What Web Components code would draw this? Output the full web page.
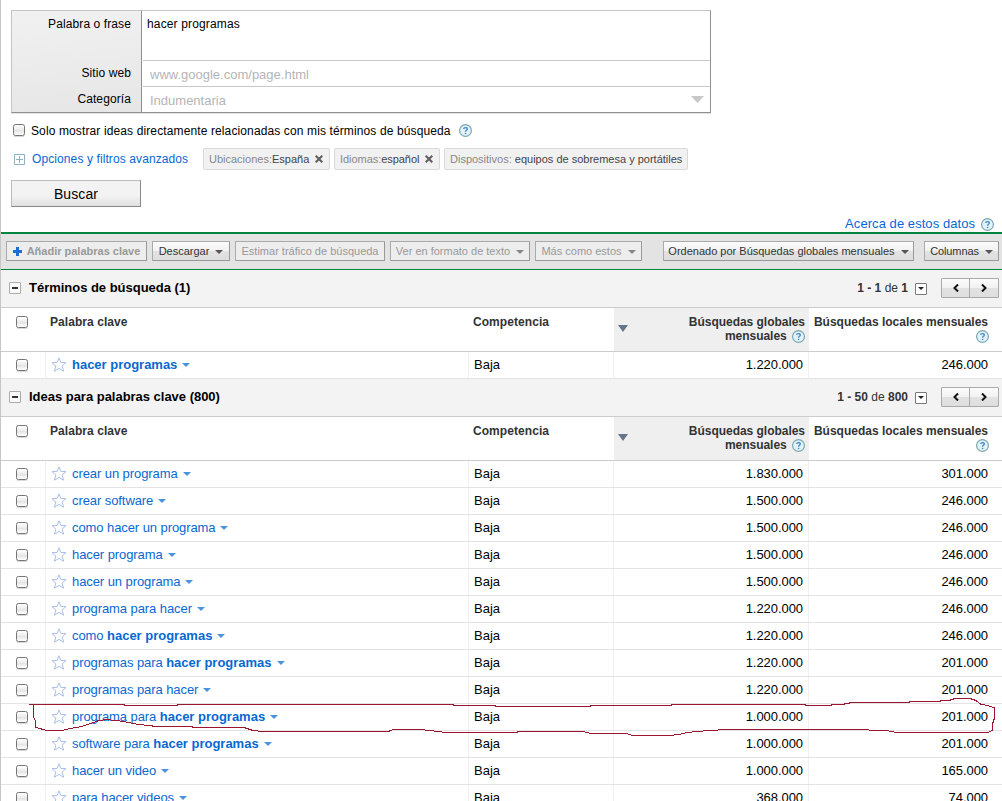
<!DOCTYPE html>
<html lang="es">
<head>
<meta charset="utf-8">
<title>Herramienta para palabras clave</title>
<style>
html, body { margin: 0; height: 801px; overflow: hidden; background: #fff; }
body { font-family: "Liberation Sans", Arial, sans-serif; font-size: 13px; color: #000; }
</style>
</head>
<body>
<keyword-tool></keyword-tool>
<script>
function define(name, css, html, setup) {
  customElements.define(name, class extends HTMLElement {
    constructor() {
      super();
      this.attachShadow({ mode: 'open' });
    }

    connectedCallback() {
      let markup = typeof html === 'function' ? html(this) : html;
      this.shadowRoot.innerHTML = `<style>:host { box-sizing: border-box; } ${css}</style>${markup}`;
      if (setup) setup(this);
    }
  });
}

define('help-icon', `
:host { display: inline-block; width: 13px; height: 13px; vertical-align: top; }
svg { display: block; }`,
`<svg width="13" height="13" viewBox="0 0 13 13">
  <circle cx="6.5" cy="6.5" r="5.9" fill="#e2f3fa" stroke="#7ba6b0" stroke-width="1.2"/>
  <path d="M4.7 5.1 C4.7 3.1 8.3 3.1 8.3 4.9 C8.3 6.2 6.5 6.2 6.5 7.8" fill="none" stroke="#4a8cc8" stroke-width="1.4"/>
  <rect x="5.8" y="8.8" width="1.5" height="1.3" fill="#4a8cc8"/>
</svg>`);

define('check-box', `
:host {
  display: block; width: 12px; height: 12px;
  border: 1px solid #757575; border-radius: 2.5px;
  background: linear-gradient(#fff 0, #ededed 45%, #e2e2e2 50%, #fff 100%);
  box-shadow: 0 1px 0 #d8d8d8;
}`, '', el => {
  el.addEventListener('click', () => el.toggleAttribute('checked'));
});

define('down-arrow', `
:host { display: inline-block; width: 7px; height: 4px; color: #555; }
svg { display: block; width: 100%; height: 100%; fill: currentColor; }`,
`<svg viewBox="0 0 8 4" preserveAspectRatio="none"><path d="M0 0H8L4 4Z"/></svg>`);

define('filter-chip', `
:host {
  display: flex; align-items: center; height: 22px; padding-left: 5px;
  border: 1px solid #d9d9d9; border-radius: 2px; background: #f1f1f1;
  font-size: 11px; color: #444; white-space: pre;
}
i { font-style: normal; color: #888; }
svg { margin-left: 6px; }`,
el => `<i>${el.getAttribute('label')}</i><slot></slot>` + (el.hasAttribute('removable')
  ? `<svg width="8" height="8" viewBox="0 0 8 8"><path d="M.7 .7L7.3 7.3M7.3 .7L.7 7.3" stroke="#606060" stroke-width="2.1"/></svg>` : ''));

define('tool-button', `
:host {
  display: flex; align-items: center; justify-content: center; flex: none; gap: 6px; height: 20px;
  border: 1px solid #aaa; border-right-color: #999; border-bottom-color: #999; border-radius: 1px;
  background: linear-gradient(#fbfbfb 0, #f2f2f2 48%, #e2e2e2 52%, #dedede 100%);
  font-size: 11px; color: #333; white-space: nowrap; cursor: pointer;
}
:host([disabled]) { background: #ededed; color: #999; cursor: default; }
:host([bold]) { font-weight: bold; gap: 5px; }
down-arrow { position: relative; top: 1px; width: 8px; }
:host([disabled]) down-arrow { color: #888; }`,
el => (el.hasAttribute('plus')
  ? `<svg width="9" height="9" viewBox="0 0 9 9"><path d="M3 0h3v3h3v3H6v3H3V6H0V3h3z" fill="#1c6fd0"/></svg>` : '')
  + `<span><slot></slot></span>` + (el.hasAttribute('menu') ? '<down-arrow></down-arrow>' : ''));

define('search-form', `
:host { display: grid; grid-template-columns: 130px 568px; width: 700px; height: 103px;
  border: 1px solid #c4c4c4; border-right-color: #8f8f8f; border-bottom-color: #8f8f8f;
  box-shadow: 0 1px 0 #e4e4e4; font-size: 12px; }
.labels { background: linear-gradient(175deg, #f1f1f1, #e6e6e6); border-right: 1px solid #8f8f8f; text-align: right; box-sizing: border-box; }
.labels, .fields { display: grid; grid-template-rows: 50px 26px 25px; }
.labels div { padding: 6px 10px 0 0; line-height: 14px; letter-spacing: .1px; }
.labels div + div { padding-top: 5px; }
.fields { padding-left: 1px; }
.fields div { border-bottom: 1px solid #c8c8c8; padding: 6px 0 0 4px; line-height: 14px; box-sizing: border-box; letter-spacing: .15px; }
.fields div + div { color: #b5b5b5; font-size: 13px; line-height: 15px; padding: 6px 6px 0 7px; letter-spacing: 0; }
.fields div:last-child { border: 0; display: flex; justify-content: space-between; }
down-arrow { width: 13px; height: 7px; color: #c8c8c8; margin-top: 3px; }`,
`<div class="labels"><div>Palabra o frase</div><div>Sitio web</div><div>Categoría</div></div>
<div class="fields"><div>hacer programas</div><div>www.google.com/page.html</div><div>Indumentaria<down-arrow></down-arrow></div></div>`);

define('search-panel', `
:host { display: block; height: 232px; padding: 10px 0 0 10px; font-size: 12px; }
.only { display: flex; margin-top: 11px; line-height: 14px; height: 14px; letter-spacing: .12px; }
.only check-box { margin: 0 6px 0 2px; }
.only help-icon { margin-left: 8px; }
.filters { display: flex; align-items: center; margin-top: 10px; height: 22px; }
.filters svg { margin: 1px 7px 0 3px; }
a { color: #0868d2; }
.filters a { width: 171px; letter-spacing: .1px; }
filter-chip { margin-right: 4px; }
.submit {
  display: block; width: 130px; height: 27px; margin-top: 10px; padding: 0; border: 1px solid #bbb;
  border-right-color: #888; border-bottom-color: #888; background: linear-gradient(#f3f3f3 60%, #e0e0e0);
  font: 14px "Liberation Sans", Arial, sans-serif; color: #000; letter-spacing: .1px;
}
.about { display: flex; justify-content: flex-end; gap: 6px; margin-top: 9px; padding-right: 8px; font-size: 13px; line-height: 15px; letter-spacing: .06px; }
.about help-icon { margin-top: 2px; }`,
`<search-form></search-form>
<div class="only"><check-box></check-box>Solo mostrar ideas directamente relacionadas con mis términos de búsqueda<help-icon></help-icon></div>
<div class="filters">
  <svg width="11" height="11" viewBox="0 0 11 11"><path d="M.5.5h10v10H.5zM2 5.5h7M5.5 2v7" fill="none" stroke="#8fb0c0"/></svg>
  <a>Opciones y filtros avanzados</a>
  <filter-chip label="Ubicaciones:" removable style="width:127px">España</filter-chip>
  <filter-chip label="Idiomas:" removable style="width:106px;letter-spacing:-.05px">español</filter-chip>
  <filter-chip label="Dispositivos: " style="width:244px">equipos de sobremesa y portátiles</filter-chip>
</div>
<button class="submit">Buscar</button>
<div class="about"><a>Acerca de estos datos</a><help-icon></help-icon></div>`);

define('result-toolbar', `
:host { display: flex; align-items: flex-start; gap: 5px; height: 38px; padding: 7px 3px 0 5px;
  border-top: 2px solid #00853f; border-bottom: 1px solid #00853f; background: #e3e3e3; }
.sort { margin-left: auto; margin-right: 5px; }`,
`<tool-button plus bold disabled style="width:141px">Añadir palabras clave</tool-button>
<tool-button menu style="width:78px">Descargar</tool-button>
<tool-button disabled style="width:150px">Estimar tráfico de búsqueda</tool-button>
<tool-button menu disabled style="width:140px">Ver en formato de texto</tool-button>
<tool-button menu disabled style="width:107px">Más como estos</tool-button>
<tool-button class="sort" menu style="width:251px">Ordenado por Búsquedas globales mensuales</tool-button>
<tool-button menu style="width:75px;letter-spacing:-.1px">Columnas</tool-button>`);

define('page-nav', `
:host { display: flex; align-items: center; font-size: 12px; color: #333; }
.size { display: flex; align-items: center; justify-content: center; box-sizing: border-box;
  width: 12px; height: 12px; margin: 2px 14px 0 7px; border: 1px solid #777; border-radius: 1px; background: #fff; }
.size down-arrow { width: 6px; height: 3px; color: #222; }
.nav { display: flex; box-sizing: border-box; width: 58px; height: 20px; border: 1px solid #aaa; border-radius: 1px;
  background: linear-gradient(#fbfbfb 0, #f2f2f2 48%, #e2e2e2 52%, #dedede 100%); }
.nav span { width: 27px; display: flex; align-items: center; justify-content: center; }
.nav span + span { width: 28px; border-left: 1px solid #aaa; }
.nav path { fill: none; stroke: #111; stroke-width: 2; }`,
el => `<span><b>${el.getAttribute('range')}</b> de <b>${el.getAttribute('total')}</b></span>
<span class="size"><down-arrow></down-arrow></span>
<div class="nav">
  <span><svg width="6" height="8" viewBox="0 0 6 8"><path d="M5 .5L1.5 4L5 7.5"/></svg></span>
  <span><svg width="6" height="8" viewBox="0 0 6 8"><path d="M1 .5L4.5 4L1 7.5"/></svg></span>
</div>`);

define('section-bar', `
:host { display: flex; align-items: center; height: 38px; padding: 0 3px 2px 8px; background: #f3f3f3; border-bottom: 1px solid #ccc; }
.toggle { display: flex; align-items: center; justify-content: center; box-sizing: border-box; width: 12px; height: 12px;
  border: 1px solid #aaa; border-radius: 1px; background: #fafafa; }
.toggle::after { content: ""; width: 6px; height: 2px; background: #333; }
b { margin: 0 auto 0 8px; letter-spacing: -.02px; }`,
el => `<span class="toggle"></span><b><slot></slot></b>
<page-nav range="${el.getAttribute('range')}" total="${el.getAttribute('total')}"></page-nav>`);

const columns = 'grid-template-columns: 45px 423px 145px 195px 1fr;';

define('keyword-head', `
:host { display: grid; ${columns} height: 44px; border-bottom: 1px solid #ccc;
  font-size: 12px; font-weight: bold; line-height: 14px; color: #333; }
div { padding-top: 7px; }
.name, .comp { padding-left: 4px; letter-spacing: .06px; }
check-box { margin: 1px 0 0 15px; }
.num { text-align: right; padding-right: 14px; }
.num help-icon { margin: 1px -1px 0 2px; }
.num.sorted { display: flex; justify-content: space-between; padding: 7px 4px 0 4px; background: #efefef; }
.sorted help-icon { margin: 1px 0 0 2px; }
.sorted span { letter-spacing: -.03px; }
.sorted down-arrow { width: 10px; height: 7px; margin-top: 10px; color: #66758c; }`,
`<div><check-box></check-box></div>
<div class="name">Palabra clave</div>
<div class="comp">Competencia</div>
<div class="num sorted"><down-arrow></down-arrow><span>Búsquedas globales<br>mensuales <help-icon></help-icon></span></div>
<div class="num">Búsquedas locales mensuales<br><help-icon></help-icon></div>`);

define('keyword-row', `
:host { display: grid; ${columns} height: 27px; border-bottom: 1px solid #e3e3e3; line-height: 15px; }
div { border-right: 1px solid #efefef; padding-top: 5px; box-sizing: border-box; }
check-box { margin: 2px 0 0 15px; }
.name { display: flex; padding-left: 5px; color: #0868d2; white-space: pre; letter-spacing: -.08px; }
.name b { letter-spacing: 0; }
::slotted(b) { letter-spacing: -.01px; }
.name svg { margin: 0 5px 0 0; }
.name down-arrow { width: 8px; margin: 6px 0 0 5px; color: #4a94dd; }
.comp { padding-left: 5px; }
.num { text-align: right; padding-right: 5px; letter-spacing: -.06px; }
.num:last-child { border: 0; padding-right: 14px; }`,
el => `<div><check-box></check-box></div>
<div class="name"><svg width="16" height="15" viewBox="0 0 16 15"><path d="M8 .8L9.9 5.5L15 5.6L11.1 9L12.6 14.2L8 11.4L3.4 14.2L4.9 9L1 5.6L6.1 5.5Z" fill="#fff" stroke="#a9bfe9"/></svg><span><slot></slot></span><down-arrow></down-arrow></div>
<div class="comp">Baja</div>
<div class="num">${el.getAttribute('global')}</div>
<div class="num">${el.getAttribute('local')}</div>`);

// hand-drawn loop around one of the rows
define('pen-mark', `
:host { position: absolute; left: 0; top: 690px; width: 1002px; height: 50px; pointer-events: none; }
path { fill: none; stroke: #9c1630; stroke-width: 1; shape-rendering: crispEdges; }`,
`<svg width="1002" height="50" viewBox="0 690 1002 50">
  <path d="M29 704.5H124V705.5H177V704.5H453V705.5H495V706.5H590V705.5H671V704.5H805.5V705.5H831V704.5H844V703.5H849V702.5H909V701.5H940V700.5H949L955 698.5H970L976 700.5L981 704.5L988 705.5L994.5 708V718L992.5 724V730L988 732.5H897L886 730.5H870L868 729.5H727L710 730.5L697 731.5L687 732.5L679 734.5L669 735.5H633L626 733.5H591L583 731.5H517V732.5H446L438 731.5L430 730.5L420 729.5H396L389 730.5V731.5H263L253 730.5L244 727.5H193L192 726.5H155L150 725.5L138 724.5L124 721.5L107 719.5L99 720.5L82 726.5L70 728.5L62 730.5H47L36 727.5L35 720L33.5 717V706L34.5 704"/>
</svg>`);

const ideas = [
  ['crear un programa', '1.830.000', '301.000'],
  ['crear software', '1.500.000', '246.000'],
  ['como hacer un programa', '1.500.000', '246.000'],
  ['hacer programa', '1.500.000', '246.000'],
  ['hacer un programa', '1.500.000', '246.000'],
  ['programa para hacer', '1.220.000', '246.000'],
  ['como <b>hacer programas</b>', '1.220.000', '246.000'],
  ['programas para <b>hacer programas</b>', '1.220.000', '201.000'],
  ['programas para hacer', '1.220.000', '201.000'],
  ['programa para <b>hacer programas</b>', '1.000.000', '201.000'],
  ['software para <b>hacer programas</b>', '1.000.000', '201.000'],
  ['hacer un video', '1.000.000', '165.000'],
  ['para hacer videos', '368.000', '74.000']
];

define('keyword-tool', `
:host { display: block; position: relative; width: 1002px; height: 801px; overflow: hidden; border-left: 1px solid #c6c6c6; }
pen-mark { left: -1px; }`,
`<search-panel></search-panel>
<result-toolbar></result-toolbar>
<section-bar range="1 - 1" total="1">Términos de búsqueda (1)</section-bar>
<keyword-head></keyword-head>
<keyword-row global="1.220.000" local="246.000"><b>hacer programas</b></keyword-row>
<section-bar range="1 - 50" total="800">Ideas para palabras clave (800)</section-bar>
<keyword-head></keyword-head>
${ideas.map(([text, global, local]) => `<keyword-row global="${global}" local="${local}">${text}</keyword-row>`).join('\n')}
<pen-mark></pen-mark>`);
</script>
</body>
</html>
